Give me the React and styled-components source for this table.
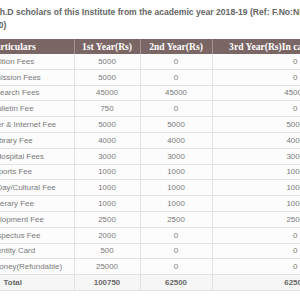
import React from "react";
import styled, { createGlobalStyle } from "styled-components";

const GlobalStyle = createGlobalStyle`
  html, body { margin: 0; padding: 0; background: #ffffff; overflow: hidden; }
  body { font-family: "Liberation Sans", Arial, sans-serif; }
`;

const Viewport = styled.div`
  width: 300px;
  height: 300px;
  overflow: hidden;
`;

/* the page is scrolled horizontally: the sheet starts left of the window */
const Sheet = styled.div`
  width: 440px;
  margin-left: -48px;
  padding-top: 6px;
`;

const Heading = styled.p`
  margin: 0 0 7px 42px;
  width: 420px;
  font-family: "Liberation Sans", Arial, sans-serif;
  font-weight: 700;
  font-size: 8.6px;
  line-height: 13px;
  color: #656565;
`;

const Table = styled.table`
  border-collapse: collapse;
  table-layout: fixed;
  width: 426px;
`;

const HeadCell = styled.th`
  background: #7b6666;
  color: #ffffff;
  font-family: "Liberation Serif", "Times New Roman", serif;
  font-weight: 700;
  font-size: 9.6px;
  height: 15px;
  padding: 0;
  text-align: center;
  white-space: nowrap;
  overflow: hidden;
  border-left: 1px solid #a39393;
  &:first-child { border-left: none; }
`;

const Row = styled.tr`
  background: ${(p) => (p.$total ? "#f6f6f6" : "#fcfcfc")};
  border-bottom: 1px solid #e2e2e2;
`;

const Cell = styled.td`
  height: 14.8px;
  padding: 0 0 0 ${(p) => p.$indent || 0}px;
  text-align: center;
  font-size: 7.9px;
  font-weight: ${(p) => (p.$bold ? 700 : 400)};
  color: ${(p) => (p.$bold ? "#666" : "#7a7a7a")};
  border-left: 1px solid #e2e2e2;
  white-space: nowrap;
  &:first-child { border-left: none; }
`;

const rows = [
  { label: "Tuition Fees", v: ["5000", "0", "0"] },
  { label: "Admission Fees", v: ["5000", "0", "0"] },
  { label: "Research Fees", v: ["45000", "45000", "45000"] },
  { label: "Bulletin Fee", v: ["750", "0", "0"] },
  { label: "Computer & Internet Fee", v: ["5000", "5000", "5000"] },
  { label: "Library Fee", v: ["4000", "4000", "4000"] },
  { label: "Hospital Fees", v: ["3000", "3000", "3000"], indent: 14 },
  { label: "Sports Fee", v: ["1000", "1000", "1000"] },
  { label: "Annual Day/Cultural Fee", v: ["1000", "1000", "1000"] },
  { label: "Literary Fee", v: ["1000", "1000", "1000"] },
  { label: "Development Fee", v: ["2500", "2500", "2500"] },
  { label: "Prospectus Fee", v: ["2000", "0", "0"] },
  { label: "Identity Card", v: ["500", "0", "0"] },
  { label: "Caution Money(Refundable)", v: ["25000", "0", "0"] },
];

export default function App() {
  return (
    <>
      <GlobalStyle />
      <Viewport>
        <Sheet>
          <Heading>
            Ph.D scholars of this Institute from the academic year 2018-19 (Ref: F.No:NITT/Acad/2019-
            <br />
            20)
          </Heading>
          <Table>
            <colgroup>
              <col style={{ width: 122 }} />
              <col style={{ width: 66 }} />
              <col style={{ width: 72 }} />
              <col style={{ width: 166 }} />
            </colgroup>
            <thead>
              <tr>
                <HeadCell>Particulars</HeadCell>
                <HeadCell>1st Year(Rs)</HeadCell>
                <HeadCell>2nd Year(Rs)</HeadCell>
                <HeadCell>3rd Year(Rs)In case of extension</HeadCell>
              </tr>
            </thead>
            <tbody>
              {rows.map((r) => (
                <Row key={r.label}>
                  <Cell $indent={r.indent}>{r.label}</Cell>
                  {r.v.map((c, i) => (
                    <Cell key={i}>{c}</Cell>
                  ))}
                </Row>
              ))}
              <Row $total>
                <Cell $bold>Total</Cell>
                <Cell $bold>100750</Cell>
                <Cell $bold>62500</Cell>
                <Cell $bold>62500</Cell>
              </Row>
            </tbody>
          </Table>
        </Sheet>
      </Viewport>
    </>
  );
}
